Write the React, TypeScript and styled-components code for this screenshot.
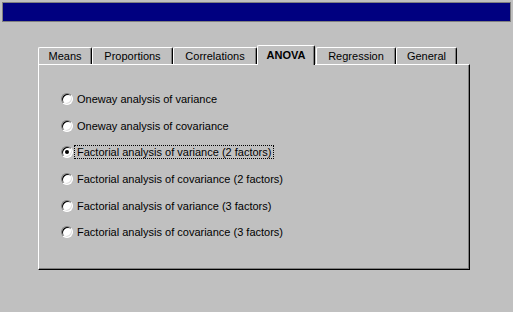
import React, { useState } from "react";
import styled, { createGlobalStyle } from "styled-components";

const Global = createGlobalStyle`
  html, body { margin: 0; padding: 0; background: #c0c0c0; }
  body { width: 513px; height: 312px; overflow: hidden; font-family: "Liberation Sans", Arial, sans-serif; font-size: 11px; color: #000; }
`;

const Screen = styled.div`
  width: 513px;
  height: 312px;
  display: flex;
  flex-direction: column;
  background: #c0c0c0;
`;

const TitleBar = styled.div`
  margin: 2px 2px 0 2px;
  height: 20px;
  box-sizing: border-box;
  border: 1px solid #808080;
  background: #000080;
`;

const Dialog = styled.div`
  margin: 23px 0 0 38px;
  width: 432px;
  display: flex;
  flex-direction: column;
`;

const TabStrip = styled.div`
  display: flex;
  align-items: flex-end;
  height: 19px;
  position: relative;
  z-index: 1;
`;

const Tab = styled.div<{ $w: number; $active?: boolean }>`
  width: ${(p) => p.$w}px;
  height: ${(p) => (p.$active ? 20 : 17)}px;
  margin-bottom: ${(p) => (p.$active ? -1 : 0)}px;
  margin-right: ${(p) => (p.$active ? 1 : 0)}px;
  box-sizing: border-box;
  border-top: 1px solid #fff;
  border-left: 1px solid #fff;
  border-right: 1px solid #000;
  border-top-left-radius: 2px;
  border-top-right-radius: 2px;
  box-shadow: inset -1px 0 0 #808080;
  background: #c0c0c0;
  display: flex;
  justify-content: center;
  align-items: ${(p) => (p.$active ? "flex-start" : "center")};
  padding-top: ${(p) => (p.$active ? 3 : 0)}px;
  font-weight: ${(p) => (p.$active ? 700 : 400)};
  font-size: 11px;
  line-height: 13px;
  white-space: nowrap;
`;

const Panel = styled.div`
  height: 206px;
  box-sizing: border-box;
  border-top: 1px solid #fff;
  border-left: 1px solid #fff;
  border-right: 1px solid #000;
  border-bottom: 1px solid #000;
  box-shadow: inset -1px -1px 0 #808080;
  padding: 21px 0 0 22px;
  display: flex;
  flex-direction: column;
`;

const Row = styled.label`
  height: 26.6px;
  display: flex;
  align-items: center;
  cursor: default;
`;

const Radio = styled.span<{ $checked?: boolean }>`
  width: 12px;
  height: 12px;
  box-sizing: border-box;
  border-radius: 50%;
  border: 1px solid;
  border-color: #808080 #fff #fff #808080;
  box-shadow: inset 1px 1px 0 #000, inset -1px -1px 0 #dfdfdf;
  background: #fff;
  display: flex;
  align-items: center;
  justify-content: center;
  flex: none;
  &::after {
    content: "";
    width: 4px;
    height: 4px;
    border-radius: 50%;
    background: #000;
    display: ${(p) => (p.$checked ? "block" : "none")};
  }
`;

const Label = styled.span<{ $focus?: boolean }>`
  margin-left: 1px;
  padding: 0 2px;
  height: 14px;
  line-height: 12px;
  box-sizing: border-box;
  border: 1px dotted ${(p) => (p.$focus ? "#000" : "transparent")};
  white-space: nowrap;
`;

const tabs = [
  { name: "Means", w: 54 },
  { name: "Proportions", w: 81 },
  { name: "Correlations", w: 84 },
  { name: "ANOVA", w: 58 },
  { name: "Regression", w: 80 },
  { name: "General", w: 61 },
];

const options = [
  "Oneway analysis of variance",
  "Oneway analysis of covariance",
  "Factorial analysis of variance (2 factors)",
  "Factorial analysis of covariance (2 factors)",
  "Factorial analysis of variance (3 factors)",
  "Factorial analysis of covariance (3 factors)",
];

export default function App() {
  const [sel, setSel] = useState(2);
  return (
    <Screen>
      <Global />
      <TitleBar />
      <Dialog>
        <TabStrip>
          {tabs.map((t) => (
            <Tab key={t.name} $w={t.w} $active={t.name === "ANOVA"}>
              {t.name}
            </Tab>
          ))}
        </TabStrip>
        <Panel>
          {options.map((o, i) => (
            <Row key={o} onClick={() => setSel(i)}>
              <Radio $checked={sel === i} />
              <Label $focus={sel === i}>{o}</Label>
            </Row>
          ))}
        </Panel>
      </Dialog>
    </Screen>
  );
}
